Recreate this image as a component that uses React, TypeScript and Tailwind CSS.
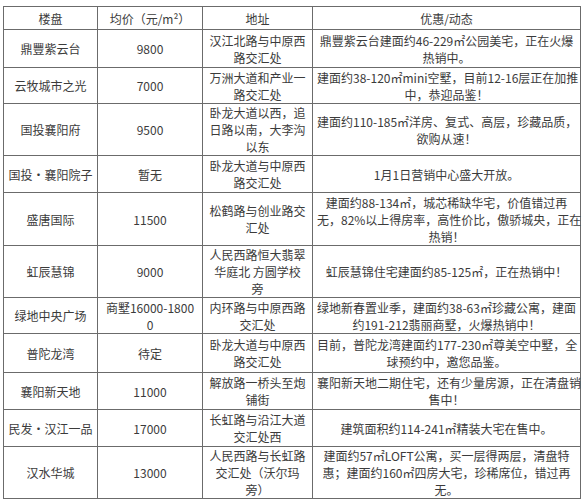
type Row = {
  name: string[];
  price: string[];
  addr: string[];
  desc: string[];
  h: string;
};

const rows: Row[] = [
  {
    name: ["鼎豐紫云台"],
    price: ["9800"],
    addr: ["汉江北路与中原西", "路交汇处"],
    desc: ["鼎豐紫云台建面约46-229㎡公园美宅，正在火爆", "热销中。"],
    h: "h-[38px]",
  },
  {
    name: ["云牧城市之光"],
    price: ["7000"],
    addr: ["万洲大道和产业一", "路交汇处"],
    desc: ["建面约38-120㎡mini空墅，目前12-16层正在加推", "中，恭迎品鉴！"],
    h: "h-[36px]",
  },
  {
    name: ["国投襄阳府"],
    price: ["9500"],
    addr: ["卧龙大道以西，追", "日路以南，大李沟", "以东"],
    desc: ["建面约110-185㎡洋房、复式、高层，珍藏品质，", "欲购从速！"],
    h: "h-[52px]",
  },
  {
    name: ["国投·襄阳院子"],
    price: ["暂无"],
    addr: ["卧龙大道与中原西", "路交汇处"],
    desc: ["1月1日营销中心盛大开放。"],
    h: "h-[37px]",
  },
  {
    name: ["盛唐国际"],
    price: ["11500"],
    addr: ["松鹤路与创业路交", "汇处"],
    desc: [
      "建面约88-134㎡，城芯稀缺华宅，价值错过再",
      "无，82%以上得房率，高性价比，傲骄城央，正在",
      "热销！",
    ],
    h: "h-[53px]",
  },
  {
    name: ["虹辰慧锦"],
    price: ["9000"],
    addr: ["人民西路恒大翡翠", "华庭北 方圆学校", "旁"],
    desc: ["虹辰慧锦住宅建面约85-125㎡，正在热销中！"],
    h: "h-[52px]",
  },
  {
    name: ["绿地中央广场"],
    price: ["商墅16000-1800", "0"],
    addr: ["内环路与中原西路", "交汇处"],
    desc: ["绿地新春置业季，建面约38-63㎡珍藏公寓，建面", "约191-212翡丽商墅，火爆热销中！"],
    h: "h-[36px]",
  },
  {
    name: ["普陀龙湾"],
    price: ["待定"],
    addr: ["卧龙大道与中原西", "路交汇处"],
    desc: ["目前，普陀龙湾建面约177-230㎡尊美空中墅，全", "球预约中，邀您品鉴。"],
    h: "h-[39px]",
  },
  {
    name: ["襄阳新天地"],
    price: ["11000"],
    addr: ["解放路一桥头至炮", "铺街"],
    desc: ["襄阳新天地二期住宅，还有少量房源，正在清盘销", "售中！"],
    h: "h-[37px]",
  },
  {
    name: ["民发·汉江一品"],
    price: ["17000"],
    addr: ["长虹路与沿江大道", "交汇处西"],
    desc: ["建筑面积约114-241㎡精装大宅在售中。"],
    h: "h-[37px]",
  },
  {
    name: ["汉水华城"],
    price: ["13000"],
    addr: ["人民西路与长虹路", "交汇处（沃尔玛", "旁）"],
    desc: [
      "建面约57㎡LOFT公寓，买一层得两层，清盘特",
      "惠；建面约160㎡四房大宅，珍稀席位，错过再",
      "无。",
    ],
    h: "h-[51px]",
  },
];

function Lines({ lines }: { lines: string[] }) {
  return (
    <>
      {lines.map((l, i) => (
        <span key={i} className="block whitespace-nowrap">
          {l}
        </span>
      ))}
    </>
  );
}

export default function App() {
  const cell = "border border-[#6b6b6b] px-1 py-0 text-center align-middle";
  return (
    <div className="w-[584px] h-[500px] bg-white overflow-hidden pt-[6px] pl-[3px] font-['Noto_Sans_CJK_SC','Liberation_Sans',sans-serif] text-[12px] leading-[17px] text-[#3b3b3b]">
      <table className="table-fixed border-collapse w-[577px]">
        <colgroup>
          <col className="w-[94px]" />
          <col className="w-[105px]" />
          <col className="w-[110px]" />
          <col className="w-[268px]" />
        </colgroup>
        <thead>
          <tr className="h-[23px]">
            <th className={cell + " font-normal"}>楼盘</th>
            <th className={cell + " font-normal"}>均价（元/m²）</th>
            <th className={cell + " font-normal"}>地址</th>
            <th className={cell + " font-normal"}>优惠/动态</th>
          </tr>
        </thead>
        <tbody>
          {rows.map((r, i) => (
            <tr key={i} className={r.h}>
              <td className={cell}>
                <Lines lines={r.name} />
              </td>
              <td className={cell}>
                <Lines lines={r.price} />
              </td>
              <td className={cell}>
                <Lines lines={r.addr} />
              </td>
              <td className={cell}>
                <Lines lines={r.desc} />
              </td>
            </tr>
          ))}
        </tbody>
      </table>
    </div>
  );
}
